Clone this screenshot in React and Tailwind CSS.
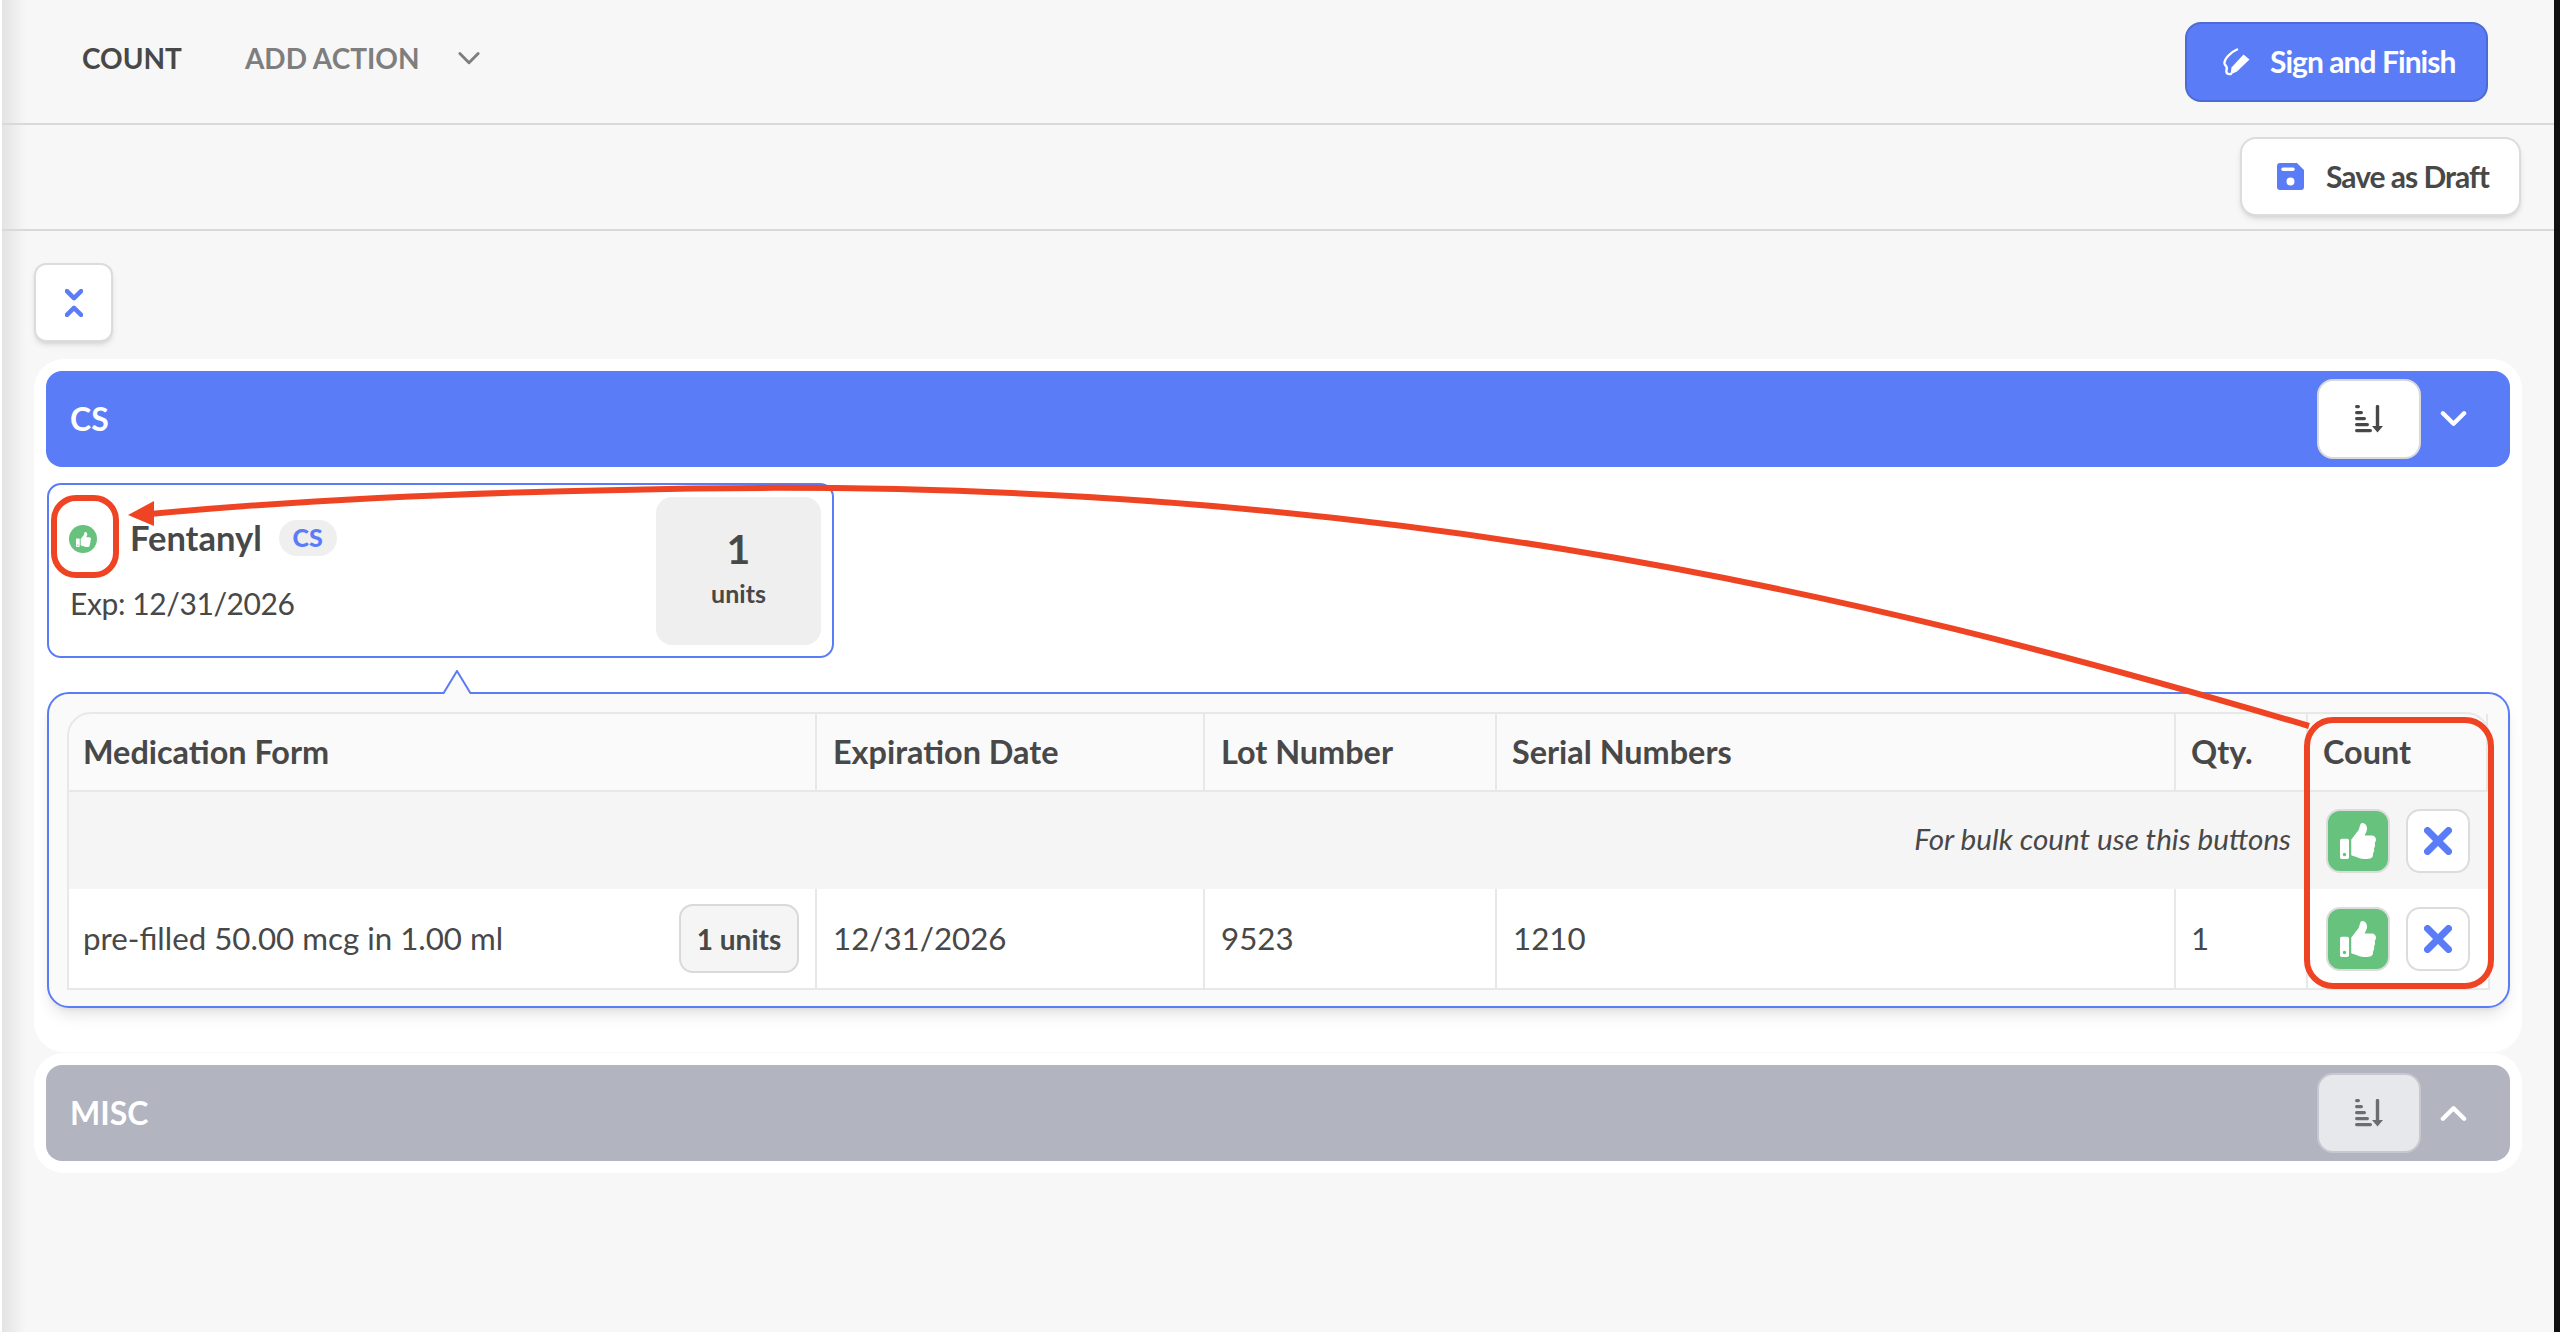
import React from 'react';
import { FaThumbsUp } from 'react-icons/fa';

function Chevron({ up, className, weight = 4.5 }) {
    return (
        <svg viewBox="0 0 28 18" className={className} fill="none" stroke="currentColor" strokeWidth={weight} strokeLinecap="round" strokeLinejoin="round">
            <polyline points={up ? '3,15 14,4 25,15' : '3,3 14,14 25,3'} />
        </svg>
    );
}

function SortIcon({ className }) {
    return (
        <svg viewBox="0 0 28 28" className={className} fill="currentColor">
            <rect x="0" y="0" width="5" height="3.2" rx="1.6" />
            <rect x="0" y="6" width="8" height="3.2" rx="1.6" />
            <rect x="0" y="12" width="11" height="3.2" rx="1.6" />
            <rect x="0" y="18" width="14" height="3.2" rx="1.6" />
            <rect x="0" y="24" width="17" height="3.2" rx="1.6" />
            <rect x="20.800" y="0" width="3.400" height="23" rx="1.4" />
            <path d="M17 21h11l-5.500 6.500z" />
        </svg>
    );
}

function CloseIcon() {
    return (
        <svg viewBox="0 0 28 28" className="w-[28px] h-[28px] text-[#5b7cf7]" fill="none" stroke="currentColor" strokeWidth="7" strokeLinecap="round">
            <line x1="3.500" y1="3.500" x2="24.500" y2="24.500" />
            <line x1="24.500" y1="3.500" x2="3.500" y2="24.500" />
        </svg>
    );
}

function SaveIcon() {
    return (
        <svg viewBox="0 0 27 27" className="w-[27px] h-[27px] text-[#5b7cf7]">
            <path fill="currentColor" fillRule="evenodd" d="M3 0h17l7 7v17a3 3 0 0 1-3 3H3a3 3 0 0 1-3-3V3a3 3 0 0 1 3-3zM6 4.500a1.700 1.700 0 0 0 0 3.500h10a1.700 1.700 0 0 0 0-3.500zM13.500 14.500a4 4 0 1 0 0 8 4 4 0 0 0 0-8z" />
        </svg>
    );
}

function SignIcon() {
    return (
        <svg viewBox="0 0 28 28" className="w-[28px] h-[28px] text-white">
            <path fill="currentColor" d="M21.500 6.500l6 5L15 23.500l-6.500 3 1-7z" />
            <path fill="none" stroke="currentColor" strokeWidth="2.400" strokeLinecap="round" strokeLinejoin="round" d="M15 1.500C9 4 2 11 2.500 15.500C3 18 6 18 4.500 22C4 25 5 26.500 9 26" />
        </svg>
    );
}

function IconButton({ className, children }) {
    return (
        <button className={`w-[64px] h-[64px] rounded-[14px] border-2 border-[#dcdcdc] flex items-center justify-center ${className}`}>
            {children}
        </button>
    );
}

function CountCell() {
    return (
        <div className="flex gap-[16px]">
            <IconButton className="bg-[#66c27c]">
                <FaThumbsUp className="w-[36px] h-[36px] text-white" />
            </IconButton>
            <IconButton className="bg-white">
                <CloseIcon />
            </IconButton>
        </div>
    );
}

function Header({ title, muted, open }) {
    return (
        <div className={`h-[96px] rounded-[16px] flex items-center pl-[24px] pr-[43px] ${muted ? 'bg-[#b2b4c0]' : 'bg-[#5b7cf7]'}`}>
            <span className="text-[32px] font-bold text-white">{title}</span>
            <button className={`ml-auto w-[104px] h-[80px] rounded-[16px] border-2 flex items-center justify-center ${muted ? 'bg-[#e7e8ec] border-[#c6c7cf] text-[#6c6d73]' : 'bg-white border-[#d9d9d9] text-[#484848]'}`}>
                <SortIcon className="w-[28px] h-[28px]" />
            </button>
            <Chevron up={!open} className="w-[27px] h-[18px] ml-[19px] text-white" />
        </div>
    );
}

export default function App() {
    const headCell = 'h-full flex items-center border-r-2 border-[#e8e8e8] text-[#484848] text-[32.4px] font-bold';
    const bodyCell = 'h-full flex items-center border-r-2 border-[#e8e8e8] text-[#484848] text-[31.3px]';

    return (
        <div className="relative w-[2560px] h-[1332px] overflow-hidden flex bg-white text-[#484848] font-['Lato',sans-serif]">
            <div className="ml-[2px] w-[2552px] h-full bg-[#f7f7f7] bg-gradient-to-r from-[#e3e3e3] to-[#f7f7f7] bg-[length:24px_100%] bg-no-repeat flex flex-col">
                {/* Top bar */}
                <div className="h-[125px] shrink-0 border-b-2 border-[#d9d9d9] flex items-center pl-[80px] pr-[66px]">
                    <span className="text-[28px] font-bold text-[#484848] -mt-[7px]">COUNT</span>
                    <span className="ml-[63px] text-[28px] font-bold text-[#7e7e7e] -mt-[7px]">ADD ACTION</span>
                    <Chevron weight={3.500} className="ml-[38px] -mt-[7px] w-[24px] h-[15px] text-[#7e7e7e]" />
                    <button className="ml-auto w-[303px] h-[80px] rounded-[16px] bg-[#5b7cf7] border-2 border-[#4d6bd6] flex items-center pl-[35px] gap-[20px] text-white text-[30px] tracking-[-0.95px] font-bold">
                        <SignIcon />
                        <span>Sign and Finish</span>
                    </button>
                </div>

                {/* Draft bar */}
                <div className="h-[106px] shrink-0 border-b-2 border-[#d9d9d9] flex items-start justify-end pt-[12px] pr-[33px]">
                    <button className="w-[281px] h-[79px] rounded-[16px] bg-white border-2 border-[#dcdcdc] shadow-md flex items-center pl-[35px] gap-[22px] text-[30px] tracking-[-1px] font-bold text-[#484848]">
                        <SaveIcon />
                        <span>Save as Draft</span>
                    </button>
                </div>

                {/* Collapse all */}
                <button className="mt-[32px] ml-[32px] w-[79px] h-[79px] shrink-0 rounded-[12px] bg-white border-2 border-[#dcdcdc] shadow-md flex flex-col items-center justify-center gap-[4px] text-[#5b7cf7]">
                    <Chevron weight={7} className="w-[18px] h-[12px]" />
                    <Chevron up weight={7} className="w-[18px] h-[12px]" />
                </button>

                {/* CS group */}
                <div className="mt-[17px] ml-[32px] mr-[32px] h-[693px] shrink-0 bg-white rounded-[30px] p-[12px]">
                    <Header title="CS" open />

                    <div className="mt-[16px] ml-[1px] w-[787px] h-[175px] rounded-[14px] border-2 border-[#5b7cf7] relative pl-[21px] pr-[11px] pt-[12px] flex">
                        <div className="flex-1 pt-[11px]">
                            <div className="flex items-center h-[60px] pl-[60px]">
                                <span className="text-[34.500px] font-bold">Fentanyl</span>
                                <span className="ml-[17px] w-[58px] h-[36px] rounded-full bg-[#efefef] flex items-center justify-center text-[#5b7cf7] text-[25px] font-black">CS</span>
                            </div>
                            <div className="mt-[11px] text-[30px] tracking-[-0.4px] leading-[48px]">Exp: 12/31/2026</div>
                        </div>
                        <div className="w-[165px] h-[148px] rounded-[16px] bg-[#efefef] flex flex-col items-center pt-[28px]">
                            <span className="text-[41px] font-bold leading-[48px]">1</span>
                            <span className="mt-[4px] text-[25px] font-bold leading-[32px]">units</span>
                        </div>
                        <span className="absolute left-[20px] top-[40px] w-[28px] h-[28px] rounded-full bg-[#66c27c] flex items-center justify-center">
                            <FaThumbsUp className="w-[15px] h-[15px] text-white" />
                        </span>
                    </div>

                    {/* Detail panel */}
                    <div className="relative mt-[34px] ml-[1px] w-[2463px] h-[316px] rounded-[22px] border-2 border-[#5b7cf7] bg-[#fafafa] shadow-lg px-[18px] pt-[18px]">
                        <svg viewBox="0 0 30 24" className="absolute left-[393px] -top-[24px] w-[30px] h-[24px]">
                            <path d="M1 24L15 1l14 23" fill="#fafafa" stroke="#5b7cf7" strokeWidth="2" />
                        </svg>
                        <div className="border-2 border-[#e8e8e8] rounded-t-[24px] h-[80px] grid grid-cols-[748px_388px_292px_679px_132px_1fr] items-center">
                            <div className={`${headCell} pl-[14px]`}>Medication Form</div>
                            <div className={`${headCell} pl-[16px]`}>Expiration Date</div>
                            <div className={`${headCell} pl-[16px]`}>Lot Number</div>
                            <div className={`${headCell} pl-[15px]`}>Serial Numbers</div>
                            <div className={`${headCell} pl-[15px]`}>Qty.</div>
                            <div className={`${headCell} pl-[15px] border-r-0`}>Count</div>
                        </div>
                        <div className="h-[97px] bg-[#f5f5f5] border-x-2 border-[#e8e8e8] flex items-center justify-end pr-[18px] gap-[35px]">
                            <i className="text-[29.700px] text-[#484848] -mt-[2px]">For bulk count use this buttons</i>
                            <CountCell />
                        </div>
                        <div className="h-[101px] bg-white border-x-2 border-b-2 border-[#e8e8e8] grid grid-cols-[748px_388px_292px_679px_132px_1fr] items-center">
                            <div className={`${bodyCell} pl-[14px] pr-[16px] justify-between`}>
                                <span>pre-filled 50.00 mcg in 1.00 ml</span>
                                <span className="w-[120px] h-[69px] rounded-[14px] bg-[#f5f5f5] border-2 border-[#d9d9d9] flex items-center justify-center text-[28px] font-bold">1 units</span>
                            </div>
                            <div className={`${bodyCell} pl-[16px]`}>12/31/2026</div>
                            <div className={`${bodyCell} pl-[16px]`}>9523</div>
                            <div className={`${bodyCell} pl-[16px]`}>1210</div>
                            <div className={`${bodyCell} pl-[15px]`}>1</div>
                            <div className="flex items-center pl-[18px]"><CountCell /></div>
                        </div>
                    </div>
                </div>

                {/* MISC group */}
                <div className="mt-[1px] ml-[32px] mr-[32px] h-[120px] shrink-0 bg-white rounded-[30px] p-[12px]">
                    <Header title="MISC" muted />
                </div>
            </div>
            <div className="w-[6px] h-full bg-[#111111]" />

            {/* Annotation drawn over the page */}
            <svg viewBox="0 0 2560 1332" className="absolute inset-0 w-[2560px] h-[1332px] pointer-events-none" fill="none">
                <rect x="54" y="498" width="62" height="77" rx="22" stroke="#ef4423" strokeWidth="6" />
                <rect x="2307" y="720" width="184" height="266" rx="26" stroke="#ef4423" strokeWidth="6" />
                <path d="M2309 726C1850 590 1350 470 620 490C450 493 300 500 150 514" stroke="#ef4423" strokeWidth="6" />
                <path d="M128 515L154 501L154 526z" fill="#ef4423" />
            </svg>
        </div>
    );
}
